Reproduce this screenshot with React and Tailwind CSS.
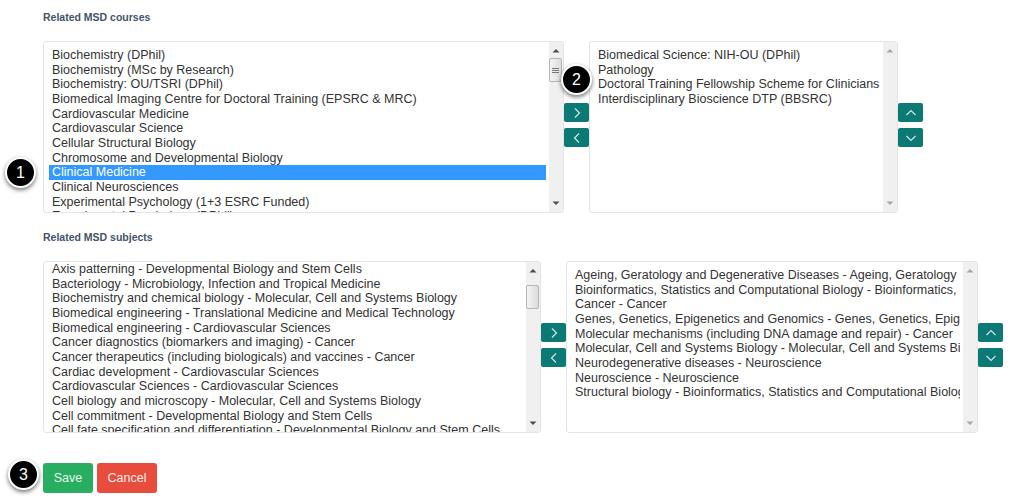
const courses = [
  "Biochemistry (DPhil)",
  "Biochemistry (MSc by Research)",
  "Biochemistry: OU/TSRI (DPhil)",
  "Biomedical Imaging Centre for Doctoral Training (EPSRC & MRC)",
  "Cardiovascular Medicine",
  "Cardiovascular Science",
  "Cellular Structural Biology",
  "Chromosome and Developmental Biology",
  "Clinical Medicine",
  "Clinical Neurosciences",
  "Experimental Psychology (1+3 ESRC Funded)",
  "Experimental Psychology (DPhil)",
];

const chosenCourses = [
  "Biomedical Science: NIH-OU (DPhil)",
  "Pathology",
  "Doctoral Training Fellowship Scheme for Clinicians",
  "Interdisciplinary Bioscience DTP (BBSRC)",
];

const subjects = [
  "Axis patterning - Developmental Biology and Stem Cells",
  "Bacteriology - Microbiology, Infection and Tropical Medicine",
  "Biochemistry and chemical biology - Molecular, Cell and Systems Biology",
  "Biomedical engineering - Translational Medicine and Medical Technology",
  "Biomedical engineering - Cardiovascular Sciences",
  "Cancer diagnostics (biomarkers and imaging) - Cancer",
  "Cancer therapeutics (including biologicals) and vaccines - Cancer",
  "Cardiac development - Cardiovascular Sciences",
  "Cardiovascular Sciences - Cardiovascular Sciences",
  "Cell biology and microscopy - Molecular, Cell and Systems Biology",
  "Cell commitment - Developmental Biology and Stem Cells",
  "Cell fate specification and differentiation - Developmental Biology and Stem Cells",
];

const chosenSubjects = [
  "Ageing, Geratology and Degenerative Diseases - Ageing, Geratology and Degenerative Diseases",
  "Bioinformatics, Statistics and Computational Biology - Bioinformatics, Statistics and Computational Biology",
  "Cancer - Cancer",
  "Genes, Genetics, Epigenetics and Genomics - Genes, Genetics, Epigenetics and Genomics",
  "Molecular mechanisms (including DNA damage and repair) - Cancer",
  "Molecular, Cell and Systems Biology - Molecular, Cell and Systems Biology",
  "Neurodegenerative diseases - Neuroscience",
  "Neuroscience - Neuroscience",
  "Structural biology - Bioinformatics, Statistics and Computational Biology",
];

function Scrollbar({ thumb, grip, faded }) {
  return (
    <div className="w-[14px] shrink-0 bg-[#f0f0f0] flex flex-col items-center relative">
      <svg width="8" height="5" viewBox="0 0 8 5" className="absolute top-[6px]">
        <path d="M0.5 4.5 L4 1 L7.5 4.5 Z" fill={faded ? "#a8a8a8" : "#4d4d4d"} />
      </svg>
      {thumb && (
        <div className={`absolute left-0 w-[13px] h-[24px] bg-linear-to-r from-[#f4f4f4] to-[#dcdcdc] border border-[#b5b5b5] rounded-[2px] flex flex-col items-center justify-center gap-px ${grip ? "top-[16px]" : "top-[23px] h-[14px]"}`}>
          {grip && <div className="w-[7px] h-px bg-[#777]" />}
          {grip && <div className="w-[7px] h-px bg-[#777]" />}
          {grip && <div className="w-[7px] h-px bg-[#777]" />}
        </div>
      )}
      <svg width="8" height="5" viewBox="0 0 8 5" className="absolute bottom-[6px]">
        <path d="M0.5 0.5 L4 4 L7.5 0.5 Z" fill={faded ? "#a8a8a8" : "#4d4d4d"} />
      </svg>
    </div>
  );
}

function ListBox({ items, selected, width, paddingTop, thumb, grip, faded }) {
  return (
    <div className={`${width} h-[172px] flex border border-[#e4e4e4] rounded-[3px] bg-white overflow-hidden shrink-0`}>
      <div className={`flex-1 min-w-0 overflow-hidden ${paddingTop} pl-[5px] pr-[3px]`}>
        {items.map((item) => (
          <div
            key={item}
            className={`h-[14.67px] leading-[14.67px] pl-[3px] whitespace-nowrap overflow-hidden ${item === selected ? "bg-[#3399ff] text-white" : ""}`}
          >
            {item}
          </div>
        ))}
      </div>
      <Scrollbar thumb={thumb} grip={grip} faded={faded} />
    </div>
  );
}

function SmallButton({ d }) {
  return (
    <button className="w-[25px] h-[19px] bg-[#0b7a75] rounded-[2px] flex items-center justify-center">
      <svg width="12" height="12" viewBox="0 0 12 12" fill="none" stroke="#cfe6e4" strokeWidth="1.2">
        <path d={d} />
      </svg>
    </button>
  );
}

const RIGHT = "M4 1.5 L8.5 6 L4 10.5";
const LEFT = "M8 1.5 L3.5 6 L8 10.5";
const UP = "M1.5 8 L6 3.5 L10.5 8";
const DOWN = "M1.5 4 L6 8.5 L10.5 4";

function ButtonPair({ first, second, top }) {
  return (
    <div className={`flex flex-col gap-[6px] shrink-0 ${top}`}>
      <SmallButton d={first} />
      <SmallButton d={second} />
    </div>
  );
}

function Badge({ n, className }) {
  return (
    <div className={`absolute w-[31px] h-[31px] rounded-full bg-black border-2 border-white text-white text-[16px] flex items-center justify-center shadow-[0_2px_4px_rgba(0,0,0,0.55)] ${className}`}>
      {n}
    </div>
  );
}

export default function App() {
  return (
    <div className="relative w-[1029px] h-[498px] overflow-hidden bg-white pl-[43px] pt-[11px] text-[#333] text-[12.5px] font-['Liberation_Sans',Arial,sans-serif]">
      <h4 className="text-[10.5px] leading-[13px] font-bold text-[#44546a]">Related MSD courses</h4>
      <div className="flex mt-[17px]">
        <ListBox items={courses} selected="Clinical Medicine" width="w-[521px]" paddingTop="pt-[6px]" thumb grip />
        <ButtonPair first={RIGHT} second={LEFT} top="mt-[62px]" />
        <ListBox items={chosenCourses} width="w-[309px]" paddingTop="pt-[6px]" faded />
        <ButtonPair first={UP} second={DOWN} top="mt-[62px]" />
      </div>

      <h4 className="text-[10.5px] leading-[13px] font-bold text-[#44546a] mt-[18px]">Related MSD subjects</h4>
      <div className="flex mt-[17px]">
        <ListBox items={subjects} width="w-[498px]" paddingTop="pt-0" thumb />
        <ButtonPair first={RIGHT} second={LEFT} top="mt-[62px]" />
        <ListBox items={chosenSubjects} width="w-[412px]" paddingTop="pt-[6px]" faded />
        <ButtonPair first={UP} second={DOWN} top="mt-[62px]" />
      </div>

      <div className="flex gap-[4px] mt-[30px]">
        <button className="w-[50px] h-[30px] bg-[#27ae60] rounded-[3px] text-[#e8f6ee] text-[12.5px]">Save</button>
        <button className="w-[60px] h-[30px] bg-[#e74c3c] rounded-[3px] text-[#fdeeec] text-[12.5px]">Cancel</button>
      </div>

      <Badge n="1" className="left-[5px] top-[157px]" />
      <Badge n="2" className="left-[561px] top-[64px]" />
      <Badge n="3" className="left-[8px] top-[459px]" />
    </div>
  );
}
